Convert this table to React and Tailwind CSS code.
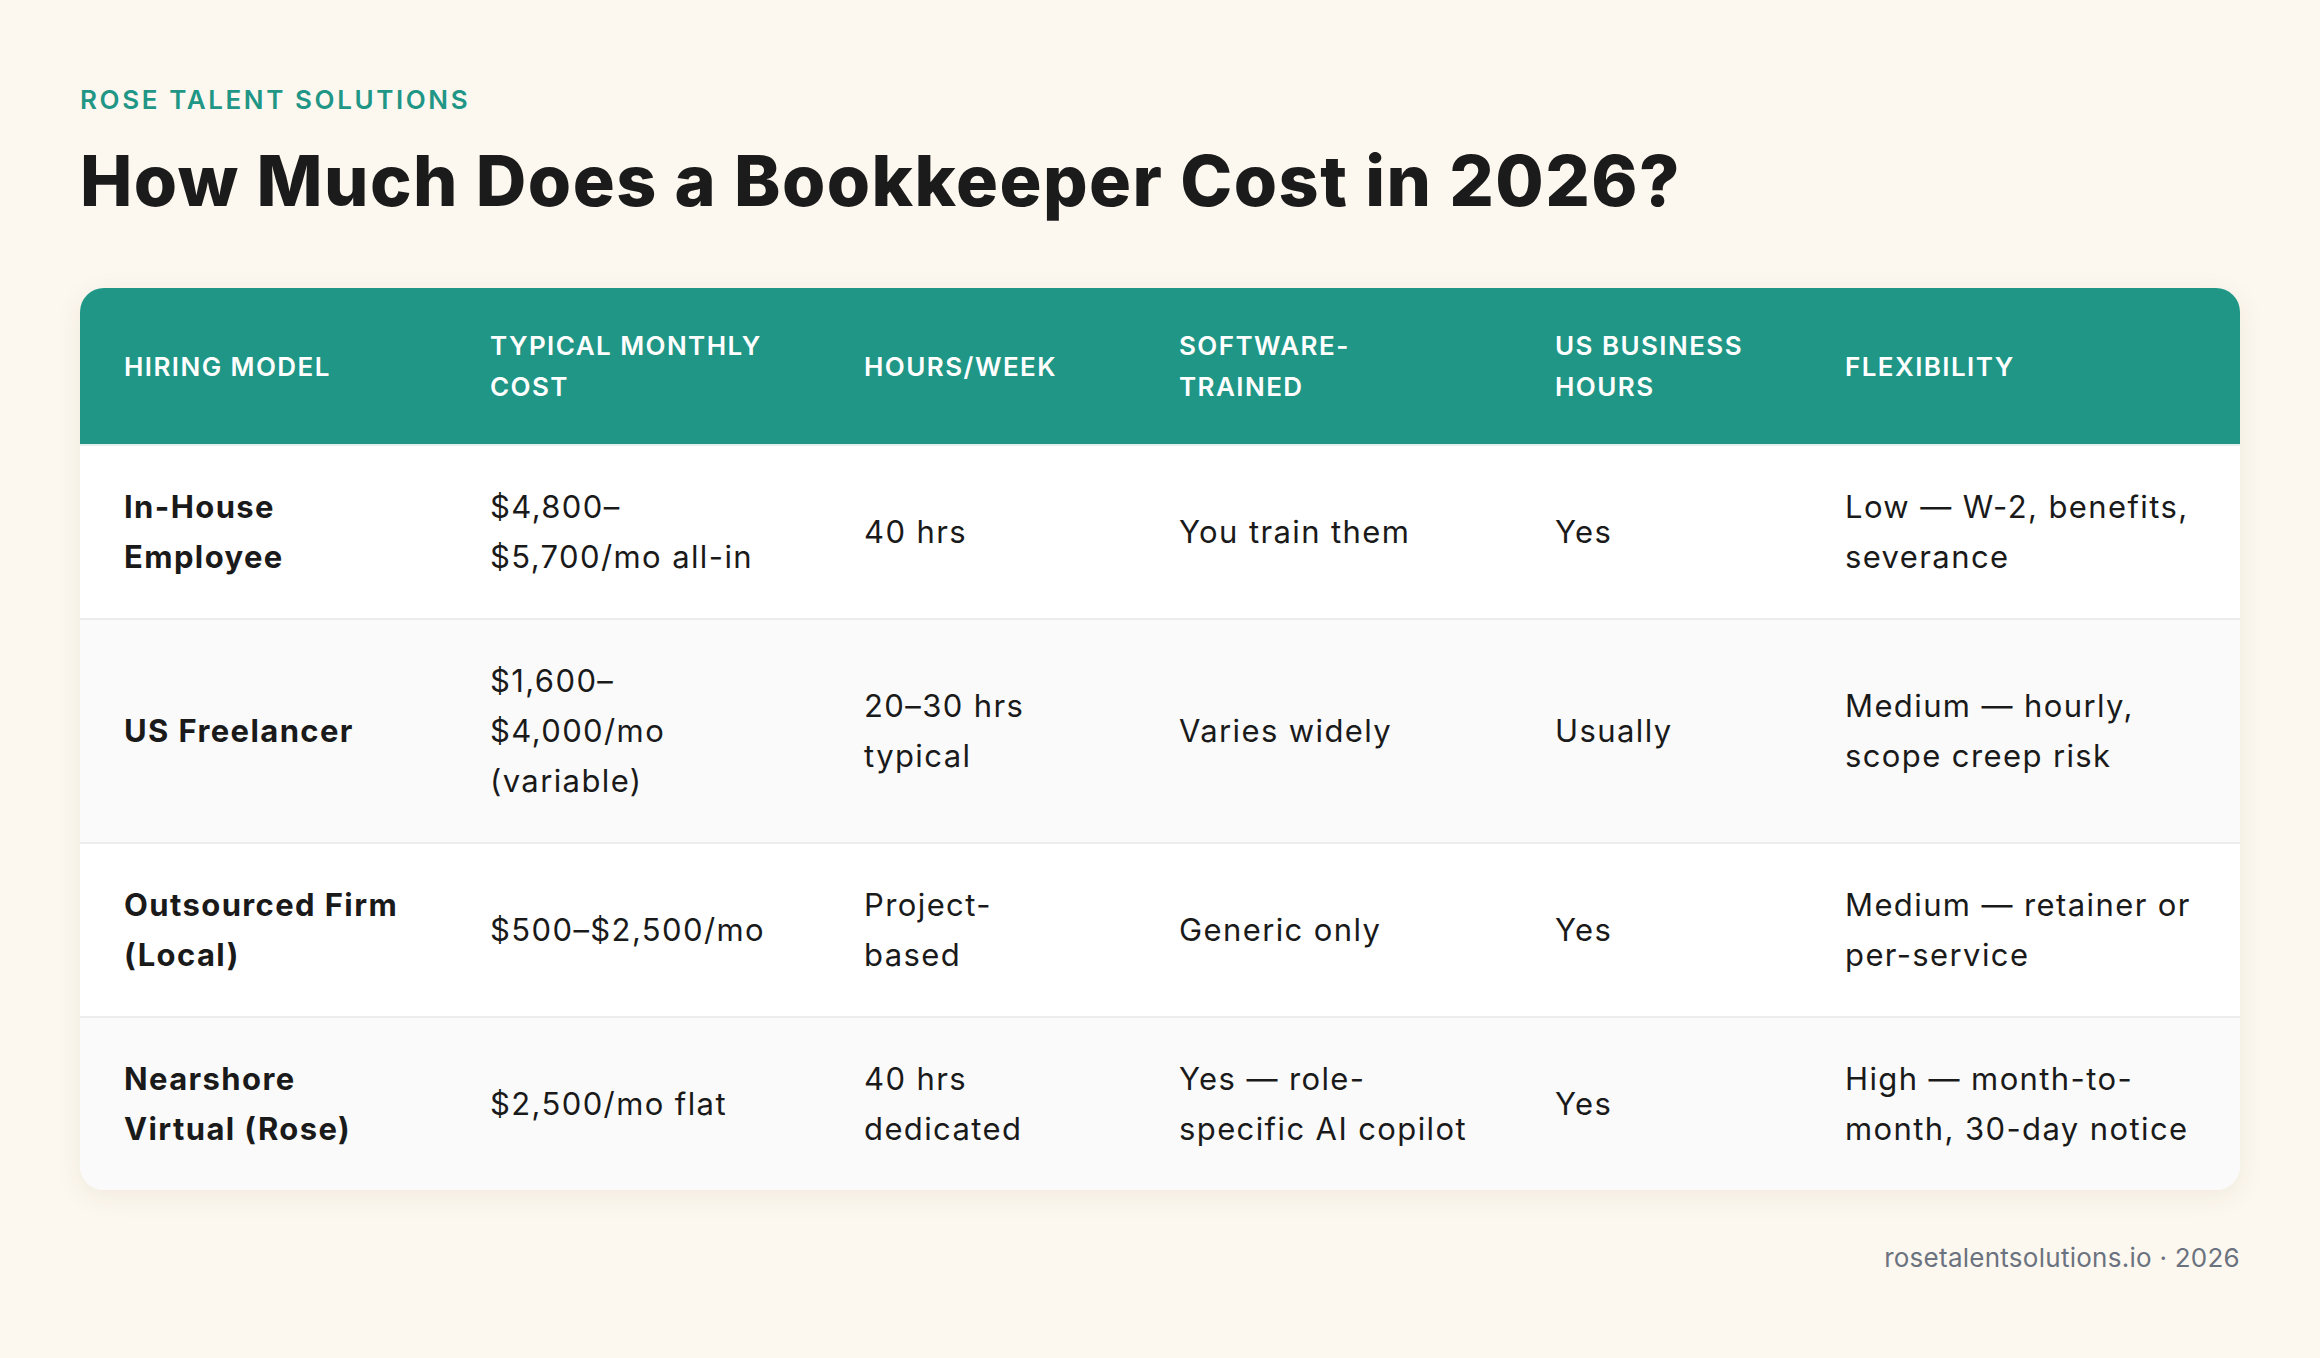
const headers = [
  ['Hiring Model'],
  ['Typical Monthly', 'Cost'],
  ['Hours/Week'],
  ['Software-', 'Trained'],
  ['US Business', 'Hours'],
  ['Flexibility'],
]

const rows = [
  [
    ['In-House', 'Employee'],
    ['$4,800–', '$5,700/mo all-in'],
    ['40 hrs'],
    ['You train them'],
    ['Yes'],
    ['Low — W-2, benefits,', 'severance'],
  ],
  [
    ['US Freelancer'],
    ['$1,600–', '$4,000/mo', '(variable)'],
    ['20–30 hrs', 'typical'],
    ['Varies widely'],
    ['Usually'],
    ['Medium — hourly,', 'scope creep risk'],
  ],
  [
    ['Outsourced Firm', '(Local)'],
    ['$500–$2,500/mo'],
    ['Project-', 'based'],
    ['Generic only'],
    ['Yes'],
    ['Medium — retainer or', 'per-service'],
  ],
  [
    ['Nearshore', 'Virtual (Rose)'],
    ['$2,500/mo flat'],
    ['40 hrs', 'dedicated'],
    ['Yes — role-', 'specific AI copilot'],
    ['Yes'],
    ['High — month-to-', 'month, 30-day notice'],
  ],
]

function Lines({ lines }) {
  return lines.map((l, i) => (
    <span key={i} className="block whitespace-nowrap">{l}</span>
  ))
}

export default function App() {
  return (
    <div className="min-h-screen bg-[#fdf8ef] px-[80px] pt-[83px] pb-[60px] text-[#1a1a1a] font-['Inter','Liberation_Sans',sans-serif]">
      {/* Eyebrow + title */}
      <p className="text-[26px] leading-[34px] font-semibold uppercase tracking-[0.1em] text-[#1f9686]">
        Rose Talent Solutions
      </p>
      <h1 className="mt-[22px] text-[70px] leading-[84px] font-extrabold tracking-[0.021em] text-[#1b1b1b]">
        How Much Does a Bookkeeper Cost in 2026?
      </h1>

      {/* Comparison table */}
      <div className="mt-[65px] rounded-[24px] overflow-hidden bg-white shadow-[0_6px_28px_rgba(60,40,10,0.07)]">
        <table className="w-full table-fixed border-collapse">
          <colgroup>
            <col className="w-[366px]" />
            <col className="w-[374px]" />
            <col className="w-[315px]" />
            <col className="w-[376px]" />
            <col className="w-[290px]" />
            <col className="w-[439px]" />
          </colgroup>
          <thead>
            <tr className="bg-[#1f9686]">
              {headers.map((h, i) => (
                <th key={i} className="px-[44px] py-[37px] text-left align-middle text-[26px] leading-[41px] font-semibold uppercase tracking-[0.055em] text-white">
                  <Lines lines={h} />
                </th>
              ))}
            </tr>
          </thead>
          <tbody>
            {rows.map((r, ri) => (
              <tr key={ri} className={`border-t-2 ${ri === 0 ? 'border-[#e6efec]' : 'border-[#ececec]'} ${ri % 2 === 1 ? 'bg-[#fafafa]' : 'bg-white'}`}>
                {r.map((c, ci) => (
                  <td key={ci} className={`px-[44px] py-[36px] align-middle text-[31px] leading-[50px] tracking-[0.045em] ${ci === 0 ? 'font-bold' : 'font-normal'}`}>
                    <Lines lines={c} />
                  </td>
                ))}
              </tr>
            ))}
          </tbody>
        </table>
      </div>

      <p className="mt-[50px] text-right text-[26px] leading-[36px] tracking-[0.01em] text-[#6b7280]">
        rosetalentsolutions.io · 2026
      </p>
    </div>
  )
}
